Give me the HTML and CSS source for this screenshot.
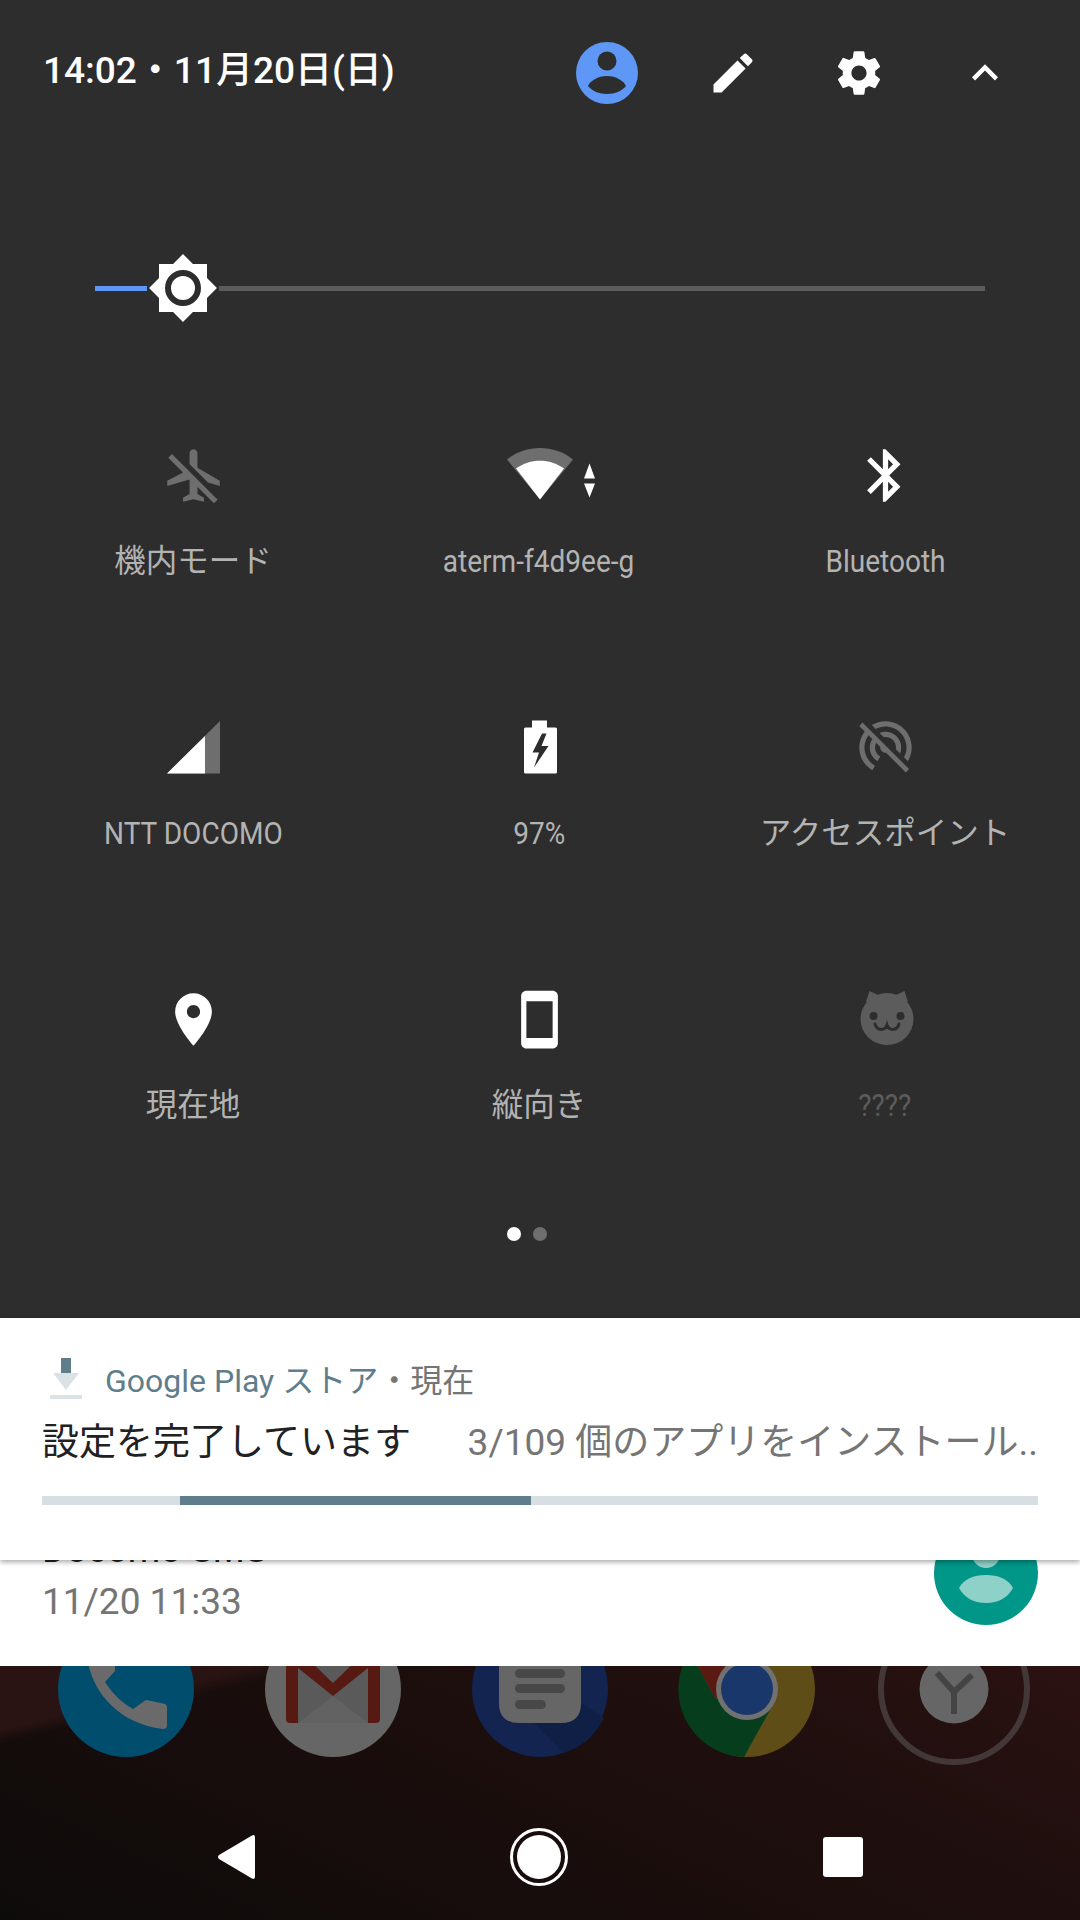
FILE: index.html
```html
<!DOCTYPE html>
<html lang="ja">
<head>
    <meta charset="UTF-8">
    <meta name="viewport" content="width=device-width, initial-scale=1.0">
    <title>Quick Settings</title>
    <link rel="stylesheet" href="styles.css">
</head>
<body>
    <div class="screen">
        <section class="panel">
            <div class="header">
                <span class="clock">14:02・11月20日(日)</span>
                <div class="header-icons">
                    <svg class="head-icon avatar" viewBox="0 0 62 62"><circle cx="31" cy="31" r="31" fill="#5e97f6"/><circle cx="31" cy="19" r="9.5" fill="#2d2d2d"/><path d="M31 34c9 0 17 5 19 10-4 5-11 8-19 8s-15-3-19-8c2-5 10-10 19-10z" fill="#2d2d2d"/></svg>
                    <svg class="head-icon" viewBox="0 0 24 24"><path fill="#fff" d="M3 17.25V21h3.75L17.81 9.94l-3.75-3.75L3 17.25zM20.71 7.04c.39-.39.39-1.02 0-1.41l-2.34-2.34c-.39-.39-1.02-.39-1.41 0l-1.83 1.83 3.75 3.75 1.83-1.83z"/></svg>
                    <svg class="head-icon" viewBox="0 0 24 24"><path fill="#fff" d="M19.43 12.98c.04-.32.07-.64.07-.98s-.03-.66-.07-.98l2.11-1.65c.19-.15.24-.42.12-.64l-2-3.46c-.12-.22-.39-.3-.61-.22l-2.49 1c-.52-.4-1.08-.73-1.69-.98l-.38-2.65C14.46 2.18 14.25 2 14 2h-4c-.25 0-.46.18-.49.42l-.38 2.65c-.61.25-1.17.59-1.69.98l-2.49-1c-.23-.09-.49 0-.61.22l-2 3.46c-.13.22-.07.49.12.64l2.11 1.65c-.04.32-.07.65-.07.98s.03.66.07.98l-2.11 1.65c-.19.15-.24.42-.12.64l2 3.46c.12.22.39.3.61.22l2.49-1c.52.4 1.08.73 1.69.98l.38 2.65c.03.24.24.42.49.42h4c.25 0 .46-.18.49-.42l.38-2.65c.61-.25 1.17-.59 1.69-.98l2.49 1c.23.09.49 0 .61-.22l2-3.46c.12-.22.07-.49-.12-.64l-2.11-1.65zM12 15.5c-1.93 0-3.5-1.57-3.5-3.5s1.57-3.5 3.5-3.5 3.5 1.57 3.5 3.5-1.57 3.5-3.5 3.5z"/></svg>
                    <svg class="head-icon" viewBox="0 0 24 24"><path fill="#fff" d="M12 8l-6 6 1.41 1.41L12 10.83l4.59 4.58L18 14z"/></svg>
                </div>
            </div>

            <div class="slider">
                <div class="slider-fill"></div>
                <svg class="slider-thumb" viewBox="0 0 24 24"><path fill="#fff" d="M20 8.69V4h-4.69L12 .69 8.69 4H4v4.69L.69 12 4 15.31V20h4.69L12 23.31 15.31 20H20v-4.69L23.31 12 20 8.69z"/><circle cx="12" cy="12" r="5" fill="none" stroke="#2d2d2d" stroke-width="2"/></svg>
                <div class="slider-rest"></div>
            </div>

            <div class="tiles">
                <div class="tile">
                    <svg class="tile-icon" viewBox="0 0 24 24"><path fill="#6e6e6e" d="M10.5 7.67V3.5c0-.83.67-1.5 1.5-1.5s1.5.67 1.5 1.5V9l8.5 5v2l-4.49-1.32-7.01-7.01zm9.28 14.94l1.41-1.41-7.69-7.7-3.98-3.98-5.72-5.72-1.41 1.41 5.62 5.62L2 14v2l8.5-2.5V19L8 20.5V22l4-1 4 1v-1.5L13.5 19v-2.67l6.28 6.28z"/></svg>
                    <span class="tile-label">機内モード</span>
                </div>
                <div class="tile">
                    <svg class="tile-icon wifi" viewBox="-2 0 112 63"><path fill="#6e6e6e" d="M55 55.500L22 15.500C40 0 70 0 88 15.500z"/><path fill="#fff" d="M55 55.500L31 24.500C45 14 65 14 79 24.500z"/><path fill="#fff" d="M104.500 19.500l5.500 15h-11zM99 39.500h11l-5.500 14z"/></svg>
                    <span class="tile-label cond">aterm-f4d9ee-g</span>
                </div>
                <div class="tile">
                    <svg class="tile-icon" viewBox="0 0 24 24"><path fill="#fff" d="M17.710 7.710L12 2h-1v7.590L6.410 5 5 6.410 10.590 12 5 17.590 6.410 19 11 14.410V22h1l5.710-5.710-4.300-4.290 4.300-4.290zM13 5.830l1.880 1.880L13 9.590V5.830zm1.880 10.460L13 18.170v-3.760l1.880 1.880z"/></svg>
                    <span class="tile-label cond">Bluetooth</span>
                </div>
                <div class="tile">
                    <svg class="tile-icon" viewBox="0 0 63 63"><path fill="#6e6e6e" d="M5 57.500L58 5v52.500z"/><path fill="#fff" d="M5 57.500L43 19.900v37.600z"/></svg>
                    <span class="tile-label cond">NTT DOCOMO</span>
                </div>
                <div class="tile">
                    <svg class="tile-icon" viewBox="0 0 63 63"><path fill="#fff" fill-rule="evenodd" d="M24 4.500h15v7h8.500q1.500 0 1.500 1.500v43q0 1.500-1.500 1.500h-30q-1.500 0-1.500-1.500V13q0-1.500 1.500-1.500H24zM34 17.500L24.500 36.500H31L26 51.500 40.500 30H33.500L38.500 17.500z"/></svg>
                    <span class="tile-label cond">97%</span>
                </div>
                <div class="tile">
                    <svg class="tile-icon" viewBox="0 0 24 24"><path fill="#6e6e6e" d="M17.560 14.240c.28-.69.44-1.450.44-2.240 0-3.310-2.690-6-6-6-.79 0-1.550.16-2.240.44l1.620 1.620c.2-.03.41-.06.62-.06 2.210 0 4 1.790 4 4 0 .21-.02.42-.05.63l1.610 1.610zM12 4c4.420 0 8 3.580 8 8 0 1.350-.35 2.620-.95 3.740l1.470 1.470C21.460 15.690 22 13.910 22 12c0-5.520-4.480-10-10-10-1.910 0-3.690.55-5.210 1.470l1.460 1.460C9.370 4.340 10.650 4 12 4zM3.270 2.500L2 3.770l2.100 2.100C2.790 7.570 2 9.690 2 12c0 3.700 2.010 6.920 4.990 8.650l1-1.730C5.610 17.530 4 14.960 4 12c0-1.760.57-3.380 1.530-4.690l1.430 1.440C6.360 9.680 6 10.800 6 12c0 2.220 1.210 4.150 3 5.190l1-1.740c-1.190-.7-2-1.970-2-3.450 0-.65.17-1.250.44-1.790l1.580 1.580L10 12c0 1.100.9 2 2 2l.21-.02.01.01 7.510 7.510L21 20.230 4.270 3.500l-1-1z"/></svg>
                    <span class="tile-label">アクセスポイント</span>
                </div>
                <div class="tile">
                    <svg class="tile-icon" viewBox="0 0 24 24"><path fill="#fff" d="M12 2C8.130 2 5 5.130 5 9c0 5.250 7 13 7 13s7-7.750 7-13c0-3.870-3.130-7-7-7zm0 9.500c-1.380 0-2.500-1.120-2.500-2.500s1.120-2.500 2.500-2.500 2.500 1.120 2.500 2.500-1.120 2.500-2.500 2.500z"/></svg>
                    <span class="tile-label">現在地</span>
                </div>
                <div class="tile">
                    <svg class="tile-icon" viewBox="0 0 24 24"><path fill="#fff" d="M17 1.010L7 1c-1.100 0-1.990.9-1.990 2v18c0 1.100.89 2 1.990 2h10c1.100 0 2-.9 2-2V3c0-1.100-.9-1.990-2-1.990zM17 19H7V5h10v14z"/></svg>
                    <span class="tile-label">縦向き</span>
                </div>
                <div class="tile">
                    <svg class="tile-icon" viewBox="0 0 63 63"><path fill="#5c5c5c" d="M12 14L15.500 3 24 7h18l8.500-4L54 14z"/><ellipse cx="33" cy="31" rx="26.500" ry="26" fill="#5c5c5c"/><circle cx="19.500" cy="28" r="4" fill="#2d2d2d"/><circle cx="46.500" cy="28" r="4" fill="#2d2d2d"/><path fill="none" stroke="#2d2d2d" stroke-width="3" stroke-linecap="round" d="M21 36c2 7 10 7 12 1 2 6 10 6 12-1"/></svg>
                    <span class="tile-label dim cond">????</span>
                </div>
            </div>

            <div class="pager">
                <span class="dot on"></span>
                <span class="dot"></span>
            </div>
        </section>

        <section class="notif">
            <div class="notif-head">
                <svg class="notif-icon" viewBox="0 0 32 41"><path fill="#607d8b" d="M11 0h10v15h-10z"/><path fill="#dbe2e5" d="M3 15h26l-13 17zM0 37h32v4H0z"/></svg>
                <span class="notif-app">Google Play ストア</span>
                <span class="notif-time">・現在</span>
            </div>
            <div class="notif-body">
                <span class="notif-title">設定を完了しています</span>
                <span class="notif-text">3/109 個のアプリをインストール..</span>
            </div>
            <div class="progress"><div class="progress-bar"></div></div>
        </section>

        <section class="sms">
            <div class="sms-text">
                <div class="sms-title">Docomo SMS</div>
                <div class="sms-date">11/20 11:33</div>
            </div>
            <svg class="sms-avatar" viewBox="0 0 104 104"><circle cx="52" cy="52" r="52" fill="#009688"/><circle cx="52" cy="33" r="14" fill="#8ed1c8"/><path d="M52 54c13 0 22 4 27 13-5 9-14 15-27 15s-22-6-27-15c5-9 14-13 27-13z" fill="#8ed1c8"/></svg>
        </section>

        <section class="wallpaper">
            <div class="dock">
                <svg class="dock-icon" viewBox="0 0 152 152"><circle cx="76" cy="76" r="68" fill="#014d6e"/><path fill="#6a6a6a" d="M37 40C38 70 62 110 113 116Q117 116 117 112V94Q117 92 115 91L97 87Q95 87 93 89L83 96C72 90 62 80 55 69L65 58V40z"/></svg>
                <svg class="dock-icon" viewBox="0 0 152 152"><circle cx="76" cy="76" r="68" fill="#666"/><path fill="#5a5a5a" d="M41 40h70v70H41z"/><path fill="#626262" d="M41 110l35-27 35 27z"/><path fill="#561a13" d="M29 40H45L76 70 107 40H123V106Q123 110 119 110H111V55L76 83 41 55V110H33Q29 110 29 106z"/></svg>
                <svg class="dock-icon" viewBox="0 0 152 152"><circle cx="76" cy="76" r="68" fill="#12244f"/><path fill="#0f1f45" d="M117 90L140 105A68 68 0 0 1 100 140L70 110H100Q117 110 117 90z"/><path fill="#666" d="M35 30h82v60q0 20-20 20H55q-20 0-20-20z"/><rect x="51" y="56" width="50" height="9" rx="4.500" fill="#484848"/><rect x="51" y="71" width="50" height="9" rx="4.500" fill="#484848"/><rect x="51" y="87" width="31" height="9" rx="4.500" fill="#484848"/></svg>
                <svg class="dock-icon" viewBox="0 0 152 152"><circle cx="76" cy="76" r="68" fill="#5f4d17"/><path fill="#063d1c" d="M19 38L44 85 99 97 73 144A68 68 0 0 1 19 38z"/><path fill="#5a1a12" d="M19 38A68 68 0 0 1 76 8V76L44 85z"/><circle cx="76" cy="76" r="31" fill="#717171"/><circle cx="76" cy="76" r="26" fill="#1a376b"/></svg>
                <svg class="dock-icon" viewBox="0 0 152 152"><circle cx="76" cy="76" r="73" fill="none" stroke="#433737" stroke-width="6"/><circle cx="76" cy="76" r="34.500" fill="#666"/><path fill="none" stroke="#444" stroke-width="6" d="M59 60L76 79 94 62M76 79V101"/></svg>
            </div>
            <div class="nav">
                <svg class="nav-back" viewBox="0 0 38 44"><path fill="#fff" d="M35 0.500q3-1.500 3 2v39q0 3.500-3 2L2 24q-2-2 0-4z"/></svg>
                <span class="nav-home"></span>
                <span class="nav-recent"></span>
            </div>
        </section>
    </div>
</body>
</html>
```

FILE: styles.css
```css
/* Quick settings shade */
* {
    box-sizing: border-box;
}

body {
    margin: 0;
    background-color: #100b0a;
    font-family: 'Roboto', 'Noto Sans CJK JP', sans-serif;
}

.screen {
    width: 1080px;
    height: 1920px;
    display: flex;
    flex-direction: column;
    overflow: hidden;
}

.panel {
    height: 1318px;
    background-color: #2d2d2d;
    flex-shrink: 0;
}

.header {
    height: 146px;
    padding-left: 43px;
    display: flex;
    justify-content: space-between;
    align-items: center;
}

.clock {
    color: #fff;
    font-size: 37px;
    font-weight: 500;
    margin-top: -13px;
}

.header-icons {
    display: flex;
    align-items: center;
    margin-right: 69px;
    gap: 74px;
}

.head-icon {
    width: 52px;
    height: 52px;
    display: block;
}

.head-icon.avatar {
    width: 62px;
    height: 62px;
    margin-right: -5px;
}

.slider {
    margin: 106px 95px 0;
    height: 72px;
    display: flex;
    align-items: center;
}

.slider-fill {
    width: 52px;
    height: 5px;
    background-color: #5e97f6;
}

.slider-thumb {
    width: 72px;
    height: 72px;
    flex-shrink: 0;
}

.slider-rest {
    flex: 1;
    height: 5px;
    background-color: #5c5c5c;
}

.tiles {
    margin: 120px 0 0 20px;
    display: grid;
    grid-template-columns: repeat(3, 346px);
    grid-auto-rows: 272px;
}

.tile {
    display: flex;
    flex-direction: column;
    align-items: center;
}

.tile-icon {
    width: 63px;
    height: 63px;
    display: block;
}

.tile-icon.wifi {
    width: 112px;
}

.tile-label {
    margin-top: 33px;
    color: #b3b3b3;
    font-size: 31.5px;
    line-height: 44px;
}

/* no Roboto Condensed here, squeeze the latin labels instead */
.tile-label.cond {
    transform: scaleX(0.89);
}

.tile-label.dim {
    color: #5c5c5c;
}

.pager {
    margin-top: -33px;
    padding-right: 26px;
    display: flex;
    justify-content: center;
    gap: 12px;
}

.dot {
    width: 14px;
    height: 14px;
    border-radius: 50%;
    background-color: #6e6e6e;
}

.dot.on {
    background-color: #fff;
}

.notif {
    height: 242px;
    padding: 38px 42px 0 42px;
    background-color: #fff;
    box-shadow: 0 2px 5px rgba(0, 0, 0, 0.35);
    position: relative;
    z-index: 2;
    flex-shrink: 0;
}

.notif-head {
    display: flex;
    align-items: center;
    height: 44px;
    font-size: 32px;
    color: #757575;
}

.notif-icon {
    width: 32px;
    height: 41px;
    margin: 0 23px 0 8px;
}

.notif-app {
    color: #607d8b;
}

.notif-body {
    display: flex;
    justify-content: space-between;
    align-items: center;
    margin-top: 14px;
    height: 50px;
}

.notif-title {
    font-size: 37px;
    color: #212121;
}

.notif-text {
    font-size: 37px;
    color: #757575;
    white-space: nowrap;
}

.progress {
    height: 9px;
    margin-top: 32px;
    background-color: #d7dfe2;
}

.progress-bar {
    width: 351px;
    height: 100%;
    margin-left: 138px;
    background-color: #607d8b;
}

.sms {
    height: 106px;
    padding: 0 42px;
    background-color: #fff;
    display: flex;
    justify-content: space-between;
    position: relative;
    z-index: 1;
    flex-shrink: 0;
}

.sms-text {
    margin-top: -31px;
}

.sms-title {
    font-size: 37px;
    line-height: 42px;
    margin-bottom: 9px;
    color: #212121;
}

.sms-date {
    font-size: 37px;
    line-height: 44px;
    color: #757575;
}

.sms-avatar {
    width: 104px;
    height: 104px;
    margin-top: -39px;
    clip-path: inset(39px 0 0 0);
}

.wallpaper {
    flex: 1;
    background:
        linear-gradient(166deg, #2a1413 0%, #2a1413 12%, rgba(42, 20, 19, 0) 15%),
        linear-gradient(205deg, #2b1112 0%, #1f0f0e 30%, #180d0c 60%, #0d0b0a 100%);
}

.dock {
    display: flex;
    justify-content: space-between;
    height: 100px;
    padding: 0 50px;
    overflow: hidden;
}

.dock-icon {
    width: 152px;
    height: 152px;
    margin-top: -53px;
    flex-shrink: 0;
    overflow: visible;
}

.nav {
    display: flex;
    justify-content: center;
    align-items: center;
    margin-top: 69px;
    height: 44px;
}

.nav-back {
    width: 38px;
    height: 44px;
    margin-right: 255px;
}

.nav-home {
    width: 58px;
    height: 58px;
    flex-shrink: 0;
    border: 3px solid #fff;
    border-radius: 50%;
    padding: 4px;
    background-color: #fff;
    background-clip: content-box;
    margin-right: 255px;
}

.nav-recent {
    width: 40px;
    height: 40px;
    border-radius: 3px;
    background-color: #fff;
}
```
